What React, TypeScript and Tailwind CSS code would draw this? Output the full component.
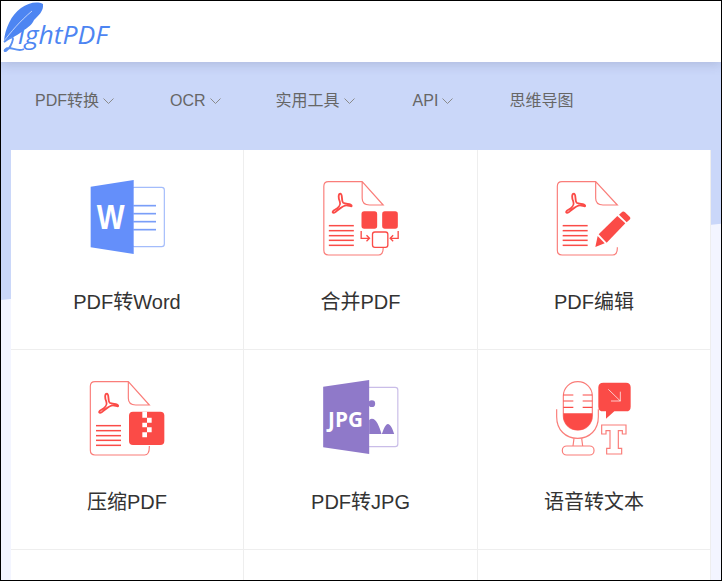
const RED = "#fb4b47";
const LIGHT = "#fa7d79";

function Adobe({ dx = 0 }: { dx?: number }) {
  return (
    <g transform={`translate(${dx},0)`} fill="none" stroke={RED} strokeWidth="5.5" strokeLinejoin="round">
      <path d="M90,71 C83,71 83,84 88,95 C92,105 82,115 72,120 C62,126 67,131 75,126 C85,119 96,106 108,106 C116,106 125,113 123,106 C121,100 106,103 98,98 C92,93 97,72 90,71 Z" />
    </g>
  );
}

function PdfDoc({ left, right, fold, textLeft, bottomEnd }: { left: number; right: number; fold: number; textLeft: number; bottomEnd: number }) {
  return (
    <g>
      <path
        d={`M${right},${bottomEnd} V${bottomEnd + 3} Q${right},255 ${right - 14},255 H${left + 14} Q${left},255 ${left},241 V49 Q${left},35 ${left + 14},35 H${fold} L${right},105 H${fold + 22} Q${fold},105 ${fold},85 V35`}
        fill="none"
        stroke={LIGHT}
        strokeWidth="3.5"
      />
      {[167, 182, 197, 211, 226].map((y) => (
        <path key={y} d={`M${textLeft},${y} H${textLeft + 75}`} stroke={RED} strokeWidth="4.5" />
      ))}
      <Adobe dx={left - 40} />
    </g>
  );
}

function WordIcon() {
  return (
    <svg width="100" height="95" viewBox="21 0 300 285">
      <rect x="185" y="52" width="98" height="178" rx="8" fill="#fff" stroke="#a3bcfb" strokeWidth="3.5" />
      {[107, 131, 155, 179].map((y) => (
        <path key={y} d={`M190,${y} H258`} stroke="#7a9ef8" strokeWidth="5" />
      ))}
      <path d="M62,50 L191,30 V252 L62,232 Z" fill="#648ffa" />
      <text transform="translate(122,178) scale(0.82,1)" textAnchor="middle" fontSize="108" fontWeight="700" fill="#fff" fontFamily="'Liberation Sans',sans-serif">W</text>
    </svg>
  );
}

function MergeIcon() {
  return (
    <svg width="100" height="95" viewBox="1.5 0 300 285">
      <PdfDoc left={40} right={218} fold={155} textLeft={55} bottomEnd={232} />
      <rect x="153" y="124" width="47" height="52" rx="8" fill={RED} />
      <rect x="215" y="124" width="47" height="52" rx="8" fill={RED} />
      <rect x="186" y="186" width="46" height="46" rx="7" fill="#fff" stroke={RED} strokeWidth="4" />
      <path d="M152,183 V205 H176 M168,196 L177,205 L168,214" fill="none" stroke={RED} strokeWidth="4" />
      <path d="M263,183 V205 H240 M248,196 L239,205 L248,214" fill="none" stroke={RED} strokeWidth="4" />
    </svg>
  );
}

function EditIcon() {
  return (
    <svg width="100" height="95" viewBox="-3 0 300 285">
      <PdfDoc left={37} right={217} fold={152} textLeft={53} bottomEnd={232} />
      <path d="M158,192 L226,124 L258,152 L188,222 L150,233 Z" fill="#fff" stroke="#fff" strokeWidth="6" />
      <path d="M161,193 L217,138 L241,160 L185,218 Z" fill={RED} />
      <path d="M222,134 L232,125 Q236,123 240,127 L254,140 Q258,144 255,148 L245,157 Z" fill={RED} />
      <path d="M158,198 L179,220 L151,231 Z" fill={RED} />
    </svg>
  );
}

function ZipIcon() {
  return (
    <svg width="100" height="95" viewBox="-9 0 300 285">
      <PdfDoc left={31} right={208} fold={145} textLeft={48} bottomEnd={228} />
      <rect x="147" y="125" width="106" height="100" rx="12" fill={RED} />
      <path d="M187,125 H201 V143 H215 V158 H201 V172 H215 V187 H201 V202 H187 V187 H201 V172 H187 V158 H201 V143 H187 Z" fill="#fff" />
    </svg>
  );
}

function JpgIcon() {
  return (
    <svg width="100" height="95" viewBox="1.5 0 300 285">
      <rect x="165" y="52" width="97" height="178" rx="8" fill="#fff" stroke="#c9bde8" strokeWidth="3.5" />
      <circle cx="184" cy="101" r="10" fill="#8f79c9" />
      <path d="M176,192 V150 C192,136 206,165 213,192 Z M214,192 C220,175 226,162 232,162 C240,162 247,178 251,192 Z" fill="#8f79c9" />
      <path d="M38,50 L176,30 V252 L38,232 Z" fill="#8f79c9" />
      <text x="105" y="170" textAnchor="middle" fontSize="62" fontWeight="700" fill="#fff" fontFamily="'Open Sans',sans-serif">JPG</text>
    </svg>
  );
}

function VoiceIcon() {
  return (
    <svg width="100" height="95" viewBox="-3 0 300 285">
      <rect x="55" y="35" width="87" height="145" rx="43" fill="#fff" stroke={LIGHT} strokeWidth="3.5" />
      <path d="M55,130 H142 V137 A43,43 0 0 1 55,137 Z" fill={RED} />
      {[75, 93, 112].map((y) => (
        <path key={y} d={`M55,${y} H85 M113,${y} H142`} stroke={RED} strokeWidth="3.5" />
      ))}
      <path d="M35,118 V140 C35,180 62,205 98,205 C134,205 160,180 160,140 V118" fill="none" stroke={LIGHT} strokeWidth="3.5" />
      <path d="M87,205 L84,228 M110,205 L113,228" fill="none" stroke={LIGHT} strokeWidth="3.5" />
      <rect x="52" y="228" width="95" height="27" rx="13" fill="#fff" stroke={LIGHT} strokeWidth="3.5" />
      <path d="M175,38 H243 Q257,38 257,52 V110 Q257,124 243,124 H208 L183,146 V124 H175 Q160,124 160,110 V52 Q160,38 175,38 Z" fill={RED} />
      <path d="M190,58 L226,93 M226,65 V93 H198" fill="none" stroke="#fff" strokeWidth="2.5" opacity="0.85" />
      <path d="M170,165 H243 V192 H232 V182 H220 V235 H230 V252 H185 V235 H195 V182 H183 V192 H170 Z" fill="#fff" stroke={LIGHT} strokeWidth="3.5" />
    </svg>
  );
}

function Cell({ label, children }: { label?: string; children?: React.ReactNode }) {
  return (
    <div className="flex h-[200px] flex-col items-center border-b border-r border-[#eeeeee] bg-white pt-5">
      {children}
      {label && <div className="mt-[22px] text-[20px] leading-[30px] text-[#333333]">{label}</div>}
    </div>
  );
}

function NavItem({ label, chevron = true, className = "" }: { label: string; chevron?: boolean; className?: string }) {
  return (
    <div className={`flex items-center ${className}`}>
      <span className="text-base text-[#666666]">{label}</span>
      {chevron && (
        <svg className="ml-1 mt-px" width="11" height="7" viewBox="0 0 11 7">
          <path d="M0.5,0.5 L5.5,5.5 L10.5,0.5" fill="none" stroke="#8a8a8a" strokeWidth="1" />
        </svg>
      )}
    </div>
  );
}

function Logo() {
  return (
    <svg width="110" height="56" viewBox="0 0 110 56" className="shrink-0">
      <path d="M3,40 C4,28 10,14 20,7 C27,2 36,0 42,3 C43,10 37,15 33,19 C31,24 26,27 22,30 C15,35 9,38 3,40 Z" fill="#4d85f2" />
      <path d="M3,40 C10,31 18,21 31,10" fill="none" stroke="#dfe9fd" strokeWidth="0.8" />
      <path d="M3,41 C8,37 12,35 12,38 C11,43 9,47 5,50 C2,51 4,47 8,47 C12,47 18,51 23,48" fill="none" stroke="#5b90f3" strokeWidth="1.8" />
      <text x="17" y="43" fontSize="26" fontStyle="italic" fontWeight="400" fill="#4d85f2" fontFamily="'Open Sans',sans-serif" textLength="90" lengthAdjust="spacingAndGlyphs">ightPDF</text>
    </svg>
  );
}

export default function App() {
  return (
    <div className="relative h-[581px] w-[722px] overflow-hidden border border-black bg-[#f3f5ff] font-['Liberation_Sans','Noto_Sans_CJK_SC',sans-serif]">
      <div className="absolute inset-x-0 top-[61px] h-[238px] bg-[#cad7f9] [clip-path:polygon(0_0,100%_0,100%_68%,0_100%)]" />
      <header className="relative flex h-[61px] items-start bg-white shadow-[0_3px_10px_rgba(60,70,110,0.18)]">
        <Logo />
      </header>
      <nav className="relative flex h-[88px] items-center gap-14 pb-[10px] pl-[34px]">
        <NavItem label="PDF转换" />
        <NavItem label="OCR" />
        <NavItem label="实用工具" className="ml-[-1px]" />
        <NavItem label="API" className="ml-[2px]" />
        <NavItem label="思维导图" chevron={false} />
      </nav>
      <main className="relative mx-[10px] grid grid-cols-[233px_234px_233px]">
        <Cell label="PDF转Word"><WordIcon /></Cell>
        <Cell label="合并PDF"><MergeIcon /></Cell>
        <Cell label="PDF编辑"><EditIcon /></Cell>
        <Cell label="压缩PDF"><ZipIcon /></Cell>
        <Cell label="PDF转JPG"><JpgIcon /></Cell>
        <Cell label="语音转文本"><VoiceIcon /></Cell>
        <Cell />
        <Cell />
        <Cell />
      </main>
    </div>
  );
}
